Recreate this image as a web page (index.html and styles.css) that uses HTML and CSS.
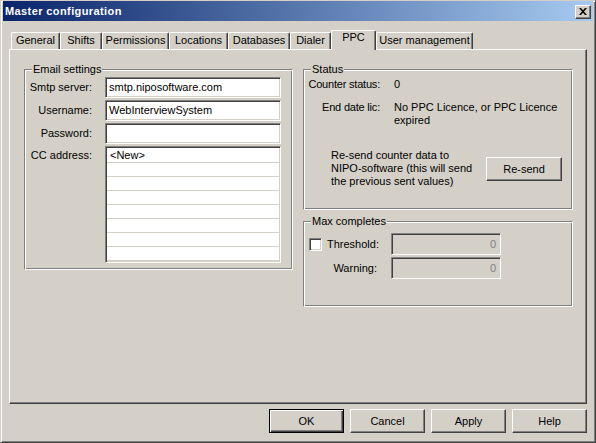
FILE: index.html
```html
<!DOCTYPE html>
<html>
<head>
<meta charset="utf-8">
<link rel="stylesheet" href="styles.css">
</head>
<body>
<div class="window">
  <div class="titlebar">
    <span class="title">Master configuration</span>
    <div class="close"><svg width="8" height="7" viewBox="0 0 8 7"><path d="M0 0h2l2 2.3L6 0h2L5 3.5 8 7H6L4 4.7 2 7H0l3-3.5z" fill="#000"/></svg></div>
  </div>
  <div class="client">
    <div class="tabs">
      <div class="tab w-general">General</div>
      <div class="tab w-shifts">Shifts</div>
      <div class="tab w-perm">Permissions</div>
      <div class="tab w-loc">Locations</div>
      <div class="tab w-db">Databases</div>
      <div class="tab w-dialer">Dialer</div>
      <div class="tab active w-ppc">PPC</div>
      <div class="tab w-user">User management</div>
    </div>
    <div class="panel">
      <div class="group email">
        <span class="legend">Email settings</span>
        <span class="label">Smtp server:</span>
        <div class="field">smtp.niposoftware.com</div>
        <span class="label">Username:</span>
        <div class="field">WebInterviewSystem</div>
        <span class="label">Password:</span>
        <div class="field"></div>
        <span class="label top">CC address:</span>
        <div class="list">
          <div class="row">&lt;New&gt;</div>
          <div class="row"></div>
          <div class="row"></div>
          <div class="row"></div>
          <div class="row"></div>
          <div class="row"></div>
          <div class="row"></div>
          <div class="row"></div>
        </div>
      </div>
      <div class="col">
        <div class="group status">
          <span class="legend">Status</span>
          <div class="srow">
            <span class="slabel">Counter status:</span>
            <span class="svalue">0</span>
          </div>
          <div class="srow second">
            <span class="slabel">End date lic:</span>
            <span class="svalue">No PPC Licence, or PPC Licence<br>expired</span>
          </div>
          <div class="resend">
            <p class="resend-text">Re-send counter data to<br>NIPO-software (this will send<br>the previous sent values)</p>
            <div class="btn resend-btn">Re-send</div>
          </div>
        </div>
        <div class="group max">
          <span class="legend">Max completes</span>
          <div class="check-row"><span class="checkbox"></span><span>Threshold:</span></div>
          <div class="field disabled">0</div>
          <span class="label">Warning:</span>
          <div class="field disabled">0</div>
        </div>
      </div>
    </div>
    <div class="buttons">
      <div class="btn default">OK</div>
      <div class="btn">Cancel</div>
      <div class="btn">Apply</div>
      <div class="btn">Help</div>
    </div>
  </div>
</div>
</body>
</html>
```
FILE: styles.css
```css
* { box-sizing: border-box; }
html, body { margin: 0; padding: 0; }
body {
  width: 596px; height: 443px; overflow: hidden;
  background: #d4d0c8;
  font-family: "Liberation Sans", Arial, sans-serif;
  font-size: 11px; color: #000;
}
.window {
  width: 596px; height: 443px;
  border: 1px solid; border-color: #d4d0c8 #404040 #404040 #d4d0c8;
  box-shadow: inset 1px 1px #fff, inset -1px -1px #808080;
  background: #d4d0c8;
  padding: 0 2px 2px 2px;
  display: flex; flex-direction: column;
}
.titlebar {
  height: 20px; flex: none;
  background: linear-gradient(to right, #0a246a, #a6caf0);
  display: flex; align-items: center; justify-content: space-between;
  padding: 0 2px;
}
.title { color: #fff; font-weight: bold; line-height: 13px; letter-spacing: 0.4px; }
.close {
  width: 16px; height: 14px; margin-top: 1px;
  background: #d4d0c8;
  border: 1px solid; border-color: #fff #404040 #404040 #fff;
  box-shadow: inset -1px -1px #808080;
  display: flex; align-items: center; justify-content: center;
}
.close svg { display: block; }
.client { flex: 1; padding: 9px 0 0 6px; display: flex; flex-direction: column; }
.tabs { display: flex; align-items: flex-end; height: 19px; padding-left: 2px; }
.tab {
  height: 17px; flex: none;
  border: 1px solid; border-bottom: 0;
  border-color: #fff #404040 #fff #fff;
  box-shadow: inset -1px 0 #808080;
  border-radius: 2px 2px 0 0;
  text-align: center; line-height: 13px; padding-top: 1px;
  white-space: nowrap;
}
.tab.active {
  height: 20px; margin-bottom: -1px; padding-top: 0;
  position: relative; z-index: 1; background: #d4d0c8;
}
.w-general { width: 49px; }
.w-shifts { width: 42px; }
.w-perm { width: 67px; }
.w-loc { width: 59px; }
.w-db { width: 62px; }
.w-dialer { width: 41px; }
.w-ppc { width: 45px; }
.w-user { width: 97px; }
.panel {
  width: 578px; height: 355px; flex: none;
  border: 1px solid; border-color: #fff #404040 #404040 #fff;
  box-shadow: inset -1px -1px #808080;
  display: flex; align-items: flex-start; gap: 10px;
  padding: 19px 0 0 14px;
}
.group {
  position: relative;
  border: 1px solid; border-color: #808080 #fff #fff #808080;
  box-shadow: inset 1px 1px #fff, inset -1px -1px #808080;
}
.legend {
  position: absolute; top: -7px; left: 7px;
  padding: 0 1px; background: #d4d0c8; line-height: 13px; white-space: nowrap;
}
.email {
  width: 269px; height: 201px; flex: none;
  padding-top: 7px;
  display: grid; grid-template-columns: 67px 176px;
  column-gap: 13px; row-gap: 2px; align-content: start;
}
.label { justify-self: end; align-self: center; white-space: nowrap; line-height: 13px; }
.label.top { align-self: start; margin-top: 3px; }
.field {
  height: 21px; background: #fff;
  border: 1px solid; border-color: #808080 #fff #fff #808080;
  box-shadow: inset 1px 1px #404040, inset -1px -1px #d4d0c8;
  padding: 0 3px; line-height: 19px; white-space: nowrap; overflow: hidden;
}
.list {
  height: 117px; background: #fff;
  border: 1px solid; border-color: #808080 #fff #fff #808080;
  box-shadow: inset 1px 1px #404040, inset -1px -1px #d4d0c8;
  padding: 2px 1px 0 1px;
}
.row { height: 14px; border-bottom: 1px solid #d4d0c8; line-height: 13px; padding-left: 3px; }
.col { display: flex; flex-direction: column; gap: 11px; flex: none; }
.status { width: 270px; height: 141px; padding: 8px 0 0 0; }
.srow { display: flex; line-height: 13px; }
.srow.second { margin-top: 10px; }
.slabel { width: 76px; text-align: right; white-space: nowrap; flex: none; letter-spacing: -0.2px; }
.svalue { margin-left: 14px; white-space: nowrap; }
.resend { display: flex; align-items: center; margin: 22px 0 0 27px; }
.resend-text { margin: 0; width: 155px; line-height: 13px; white-space: nowrap; }
.btn {
  width: 75px; height: 24px; flex: none;
  background: #d4d0c8;
  border: 1px solid; border-color: #fff #404040 #404040 #fff;
  box-shadow: inset -1px -1px #808080;
  text-align: center; line-height: 22px;
}
.resend-btn { width: 76px; }
.btn.default {
  border-color: #000;
  box-shadow: inset 1px 1px #fff, inset -1px -1px #404040, inset -2px -2px #808080;
}
.max {
  width: 270px; height: 86px;
  padding: 11px 0 0 5px;
  display: grid; grid-template-columns: 68px 110px;
  column-gap: 14px; row-gap: 2px; grid-auto-rows: 22px; align-content: start;
}
.check-row { display: flex; align-items: center; white-space: nowrap; line-height: 13px; }
.checkbox {
  width: 13px; height: 13px; flex: none; margin-right: 5px; background: #fff;
  border: 1px solid; border-color: #808080 #fff #fff #808080;
  box-shadow: inset 1px 1px #404040, inset -1px -1px #d4d0c8;
}
.field.disabled {
  height: 22px; background: #d4d0c8; color: #808080;
  text-align: right; line-height: 20px; padding-right: 4px;
}
.buttons {
  width: 578px; display: flex; justify-content: flex-end; gap: 6px;
  margin-top: 5px;
}
```
